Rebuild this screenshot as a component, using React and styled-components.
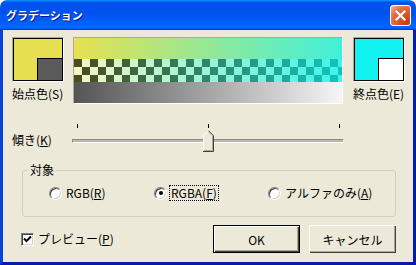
import React from 'react';
import styled, { createGlobalStyle } from 'styled-components';

const FONT = `"Noto Sans CJK JP", "Liberation Sans", sans-serif`;

const GlobalStyle = createGlobalStyle`
  html, body { margin: 0; padding: 0; background: #fff; }
  body { font-family: ${FONT}; }
`;

const Window = styled.div`
  width: 416px;
  height: 265px;
  display: flex;
  flex-direction: column;
  font-family: ${FONT};
  font-size: 12px;
  color: #000;
`;

const TitleBar = styled.div`
  flex: none;
  height: 30px;
  display: flex;
  align-items: center;
  justify-content: space-between;
  padding: 0 5px 0 6px;
  border-radius: 7px 7px 0 0;
  background: linear-gradient(180deg, #0997ff, #0053ee 8%, #0050ee 40%, #0066ff 88%, #0066ff 93%, #005bff 95%, #003dd7 96%, #003dd7);
`;

const Title = styled.span`
  color: #fff;
  font-weight: bold;
  font-size: 11px;
  text-shadow: 1px 1px #0a1883;
`;

const CloseButton = styled.div`
  width: 21px;
  height: 21px;
  box-sizing: border-box;
  border: 1px solid #fff;
  border-radius: 3px;
  background: radial-gradient(circle at 85% 85%, #c43c10 0, #dd5a2c 45%, #e56c45 65%, #f4a58a 92%, #fff 100%);
  display: flex;
  align-items: center;
  justify-content: center;
`;

const Client = styled.div`
  flex: 1;
  background: #ece9d8;
  border: 3px solid #0842d6;
  border-top: 0;
  border-right-color: #001ea8;
  border-bottom-color: #001ea8;
  padding: 7px 8px 0 9px;
  display: flex;
  flex-direction: column;
`;

const ColorRow = styled.div`
  display: flex;
  align-items: flex-start;
`;

const SwatchCol = styled.div`
  width: 52px;
  margin-left: ${p => p.$gap || 0}px;
  display: flex;
  flex-direction: column;
`;

const Swatch = styled.div`
  width: 52px;
  height: 45px;
  box-sizing: border-box;
  border: 1px solid;
  border-color: #aca899 #fff #fff #aca899;
  display: flex;
`;

const SwatchInner = styled.div`
  flex: 1;
  border: 1px solid #000;
  background: ${p => p.$color};
  display: flex;
  align-items: flex-end;
  justify-content: flex-end;
`;

const AlphaCorner = styled.div`
  width: 25px;
  height: 22px;
  box-sizing: border-box;
  border-top: 1px solid #000;
  border-left: 1px solid #000;
  background: ${p => p.$alpha};
`;

const SwatchLabel = styled.span`
  margin-top: 5px;
  line-height: 14px;
  white-space: nowrap;
`;

const GradientBox = styled.div`
  margin-left: 9px;
  width: 270px;
  height: 67px;
  box-sizing: border-box;
  border: 1px solid;
  border-color: #aca899 #fff #fff #aca899;
  display: flex;
  flex-direction: column;
`;

const ColorStrip = styled.div`
  height: 21px;
  background: linear-gradient(to right, #e8e050, #40f0dc);
`;

const AlphaStrip = styled.div`
  height: 23px;
  background:
    linear-gradient(to right, rgba(232, 224, 80, 0.33), rgba(20, 240, 230, 0.82)),
    conic-gradient(#fff 25%, #000 0 50%, #fff 0 75%, #000 0) 0 0 / 16px 16px;
`;

const GrayStrip = styled.div`
  height: 21px;
  background: linear-gradient(to right, #545454, #f6f6f6);
`;

const U = styled.span`
  text-decoration: underline;
  text-underline-offset: 1px;
`;

const SliderRow = styled.div`
  display: flex;
  align-items: center;
  margin-top: 20px;
`;

const SliderLabel = styled.span`
  width: 60px;
  line-height: 14px;
  margin-top: 4px;
`;

const SliderArea = styled.div`
  position: relative;
  width: 272px;
  height: 28px;
`;

const Ticks = styled.div`
  display: flex;
  justify-content: space-between;
  padding: 0 4px 0 5px;
  height: 4px;
`;

const Tick = styled.i`
  width: 1px;
  height: 4px;
  background: #000;
`;

const Track = styled.div`
  margin-top: 11px;
  height: 4px;
  box-sizing: border-box;
  border: 1px solid;
  border-color: #8d8b82 #fff #fff #8d8b82;
  background: #b9b7ae;
`;

const Thumb = styled.svg`
  position: absolute;
  left: 131px;
  top: 6px;
`;

const Group = styled.fieldset`
  margin: 11px 9px 0 10px;
  padding: 9px 0 16px 0;
  min-width: 0;
  border: 1px solid #d0d0bf;
  border-radius: 3px;
`;

const Legend = styled.legend`
  margin-left: 5px;
  padding: 0 2px;
  line-height: 14px;
`;

const RadioRow = styled.div`
  display: flex;
  align-items: center;
  padding-left: 26px;
`;

const RadioOption = styled.label`
  display: flex;
  align-items: center;
  gap: 3px;
  width: ${p => (p.$w ? `${p.$w}px` : 'auto')};
  line-height: 14px;
  white-space: nowrap;
`;

const RadioDot = styled.span`
  width: 13px;
  height: 13px;
  box-sizing: border-box;
  border-radius: 50%;
  border: 1px solid;
  border-color: #808080 #fff #fff #808080;
  box-shadow: inset 1px 1px #404040, inset -1px -1px #d4d0c8;
  background: #fff;
  display: flex;
  align-items: center;
  justify-content: center;
  &::after {
    content: '';
    width: 4px;
    height: 4px;
    border-radius: 50%;
    background: ${p => (p.$checked ? '#000' : 'transparent')};
  }
`;

const RadioText = styled.span`
  padding: 0 1px;
  outline: ${p => (p.$focus ? '1px dotted #000' : 'none')};
`;

const BottomRow = styled.div`
  display: flex;
  align-items: center;
  margin: 8px 9px 0 9px;
`;

const CheckLabel = styled.label`
  display: flex;
  align-items: center;
  gap: 4px;
  line-height: 14px;
`;

const CheckBox = styled.span`
  width: 13px;
  height: 13px;
  box-sizing: border-box;
  border: 1px solid;
  border-color: #808080 #fff #fff #808080;
  box-shadow: inset 1px 1px #404040, inset -1px -1px #d4d0c8;
  background: #fff;
  display: flex;
  align-items: center;
  justify-content: center;
`;

const Buttons = styled.div`
  margin-left: auto;
  display: flex;
  gap: 9px;
`;

const Button = styled.button`
  width: 87px;
  height: 28px;
  padding: 0;
  font-family: ${FONT};
  font-size: 12px;
  color: #000;
  background: #ece9d8;
  border: ${p => (p.$default ? '1px solid #000' : 'none')};
  box-shadow: inset 1px 1px #fff, inset -1px -1px #404040, inset -2px -2px #aca899;
`;

export default function App() {
  return (
    <>
      <GlobalStyle />
      <Window>
        <TitleBar>
          <Title>グラデーション</Title>
          <CloseButton>
            <svg width="11" height="11" viewBox="0 0 11 11">
              <path d="M1.5 1.5 L9.5 9.5 M9.5 1.5 L1.5 9.5" stroke="#fff" strokeWidth="2.2" strokeLinecap="square" />
            </svg>
          </CloseButton>
        </TitleBar>
        <Client>
          <ColorRow>
            <SwatchCol>
              <Swatch>
                <SwatchInner $color="#e6e050">
                  <AlphaCorner $alpha="#5a5a5a" />
                </SwatchInner>
              </Swatch>
              <SwatchLabel>始点色(S)</SwatchLabel>
            </SwatchCol>
            <GradientBox>
              <ColorStrip />
              <AlphaStrip />
              <GrayStrip />
            </GradientBox>
            <SwatchCol $gap={10}>
              <Swatch>
                <SwatchInner $color="#12f2f0">
                  <AlphaCorner $alpha="#fff" />
                </SwatchInner>
              </Swatch>
              <SwatchLabel>終点色(E)</SwatchLabel>
            </SwatchCol>
          </ColorRow>

          <SliderRow>
            <SliderLabel>傾き(<U>K</U>)</SliderLabel>
            <SliderArea>
              <Ticks>
                <Tick />
                <Tick />
                <Tick />
              </Ticks>
              <Track />
              <Thumb width="11" height="22" viewBox="0 0 11 22">
                <path d="M5 0 L10 5 L10 21 L0 21 L0 5 Z" fill="#ece9d8" />
                <path d="M0.5 21 L0.5 5.2 L5 0.7" stroke="#fff" fill="none" />
                <path d="M5.5 0.7 L10.5 5.7 L10.5 21.5 L0 21.5" stroke="#404040" fill="none" />
                <path d="M5.5 1.9 L9.5 5.9 L9.5 20.5 L1 20.5" stroke="#aca899" fill="none" />
              </Thumb>
            </SliderArea>
          </SliderRow>

          <Group>
            <Legend>対象</Legend>
            <RadioRow>
              <RadioOption $w={105}>
                <RadioDot />
                <RadioText>RGB(<U>R</U>)</RadioText>
              </RadioOption>
              <RadioOption $w={114}>
                <RadioDot $checked />
                <RadioText $focus>RGBA(<U>F</U>)</RadioText>
              </RadioOption>
              <RadioOption>
                <RadioDot />
                <RadioText>アルファのみ(<U>A</U>)</RadioText>
              </RadioOption>
            </RadioRow>
          </Group>

          <BottomRow>
            <CheckLabel>
              <CheckBox>
                <svg width="9" height="9" viewBox="0 0 9 9">
                  <path d="M1 3.5 L3.5 6 L8 1.5" stroke="#000" strokeWidth="2" fill="none" />
                </svg>
              </CheckBox>
              <span>プレビュー(<U>P</U>)</span>
            </CheckLabel>
            <Buttons>
              <Button $default>OK</Button>
              <Button>キャンセル</Button>
            </Buttons>
          </BottomRow>
        </Client>
      </Window>
    </>
  );
}
